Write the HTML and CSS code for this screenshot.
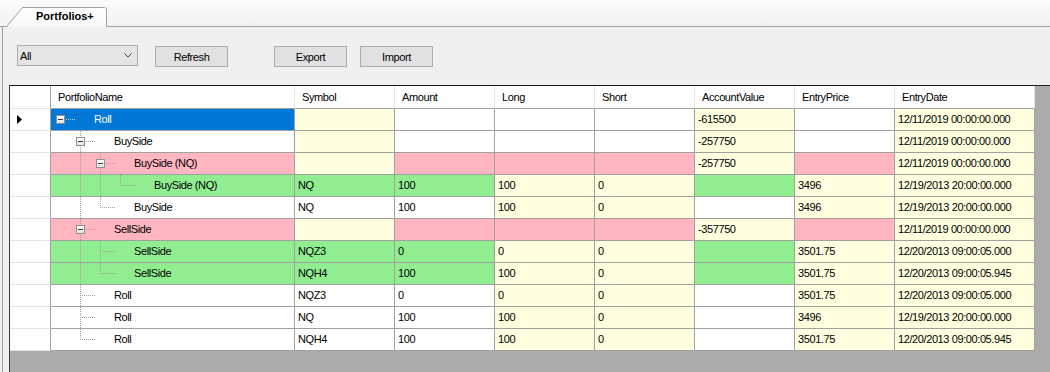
FILE: index.html
```html
<!DOCTYPE html>
<html lang="en">
<head>
  <meta charset="UTF-8" />
  <title>Portfolios+</title>
  <link rel="stylesheet" href="styles.css">
</head>
<body>
  <!-- tab strip -->
  <div class="tabstrip">
    <div class="tab">
      <svg class="tab-shape" width="103" height="20" viewBox="0 0 103 20">
        <defs>
          <linearGradient id="tabfill" x1="0" y1="0" x2="0" y2="1">
            <stop offset="0" stop-color="#ffffff"/>
            <stop offset="1" stop-color="#f7f7f7"/>
          </linearGradient>
        </defs>
        <path d="M0.5,21 L17.5,0.5 L99.5,0.5 Q101.5,0.5 101.5,2.5 L101.5,21" fill="url(#tabfill)" stroke="#a0a0a0"/>
      </svg>
      <span>Portfolios+</span>
    </div>
  </div>

  <div class="panel">
    <div class="toolbar">
      <div class="combo">
        <span>All</span>
        <svg width="8" height="5" viewBox="0 0 8 5"><polyline points="0.5,0.5 4,4 7.5,0.5" fill="none" stroke="#444"/></svg>
      </div>
      <button class="btn btn-refresh">Refresh</button>
      <button class="btn btn-export">Export</button>
      <button class="btn btn-import">Import</button>
    </div>

    <div class="grid">
      <table class="tree-grid">
        <colgroup>
          <col class="c-rh"><col class="c-name">
          <col class="c-std"><col class="c-std"><col class="c-std"><col class="c-std"><col class="c-std"><col class="c-std">
          <col class="c-date">
        </colgroup>
        <thead>
          <tr>
            <th class="corner"></th>
            <th>PortfolioName</th>
            <th>Symbol</th>
            <th>Amount</th>
            <th>Long</th>
            <th>Short</th>
            <th>AccountValue</th>
            <th>EntryPrice</th>
            <th>EntryDate</th>
          </tr>
        </thead>
        <tbody>
          <tr>
            <td class="rh"><svg width="5" height="9" viewBox="0 0 5 9"><polygon points="0,0 5,4.5 0,9" fill="#000"/></svg></td>
            <td class="name sel"><div class="node"><span class="g exp"><i class="box"></i></span><span class="label">Roll</span></div></td>
            <td class="y"></td><td></td><td></td><td></td>
            <td class="y">-615500</td><td></td><td class="y">12/11/2019 00:00:00.000</td>
          </tr>
          <tr>
            <td class="rh"></td>
            <td class="name"><div class="node"><span class="g"></span><span class="g exp pipe"><i class="box"></i></span><span class="label">BuySide</span></div></td>
            <td class="y"></td><td></td><td></td><td></td>
            <td class="y">-257750</td><td></td><td class="y">12/11/2019 00:00:00.000</td>
          </tr>
          <tr>
            <td class="rh"></td>
            <td class="name p"><div class="node"><span class="g"></span><span class="g pipe"></span><span class="g exp pipe"><i class="box"></i></span><span class="label">BuySide (NQ)</span></div></td>
            <td class="y"></td><td class="p"></td><td class="p"></td><td class="p"></td>
            <td class="y">-257750</td><td class="p"></td><td class="y">12/11/2019 00:00:00.000</td>
          </tr>
          <tr>
            <td class="rh"></td>
            <td class="name gr"><div class="node"><span class="g"></span><span class="g pipe"></span><span class="g pipe"></span><span class="g elbow"></span><span class="label">BuySide (NQ)</span></div></td>
            <td class="gr">NQ</td><td class="gr">100</td><td class="y">100</td><td class="y">0</td>
            <td class="gr"></td><td class="y">3496</td><td class="y">12/19/2013 20:00:00.000</td>
          </tr>
          <tr>
            <td class="rh"></td>
            <td class="name"><div class="node"><span class="g"></span><span class="g pipe"></span><span class="g elbow"></span><span class="label">BuySide</span></div></td>
            <td>NQ</td><td>100</td><td class="y">100</td><td class="y">0</td>
            <td></td><td class="y">3496</td><td class="y">12/19/2013 20:00:00.000</td>
          </tr>
          <tr>
            <td class="rh"></td>
            <td class="name p"><div class="node"><span class="g"></span><span class="g exp pipe"><i class="box"></i></span><span class="label">SellSide</span></div></td>
            <td class="y"></td><td class="p"></td><td class="p"></td><td class="p"></td>
            <td class="y">-357750</td><td class="p"></td><td class="y">12/11/2019 00:00:00.000</td>
          </tr>
          <tr>
            <td class="rh"></td>
            <td class="name gr"><div class="node"><span class="g"></span><span class="g pipe"></span><span class="g tee"></span><span class="label">SellSide</span></div></td>
            <td class="gr">NQZ3</td><td class="gr">0</td><td class="y">0</td><td class="y">0</td>
            <td class="gr"></td><td class="y">3501.75</td><td class="y">12/20/2013 09:00:05.000</td>
          </tr>
          <tr>
            <td class="rh"></td>
            <td class="name gr"><div class="node"><span class="g"></span><span class="g pipe"></span><span class="g elbow"></span><span class="label">SellSide</span></div></td>
            <td class="gr">NQH4</td><td class="gr">100</td><td class="y">100</td><td class="y">0</td>
            <td class="gr"></td><td class="y">3501.75</td><td class="y">12/20/2013 09:00:05.945</td>
          </tr>
          <tr>
            <td class="rh"></td>
            <td class="name"><div class="node"><span class="g"></span><span class="g tee"></span><span class="label">Roll</span></div></td>
            <td>NQZ3</td><td>0</td><td class="y">0</td><td class="y">0</td>
            <td></td><td class="y">3501.75</td><td class="y">12/20/2013 09:00:05.000</td>
          </tr>
          <tr>
            <td class="rh"></td>
            <td class="name"><div class="node"><span class="g"></span><span class="g tee"></span><span class="label">Roll</span></div></td>
            <td>NQ</td><td>100</td><td class="y">100</td><td class="y">0</td>
            <td></td><td class="y">3496</td><td class="y">12/19/2013 20:00:00.000</td>
          </tr>
          <tr>
            <td class="rh"></td>
            <td class="name"><div class="node"><span class="g"></span><span class="g elbow"></span><span class="label">Roll</span></div></td>
            <td>NQH4</td><td>100</td><td class="y">100</td><td class="y">0</td>
            <td></td><td class="y">3501.75</td><td class="y">12/20/2013 09:00:05.945</td>
          </tr>
        </tbody>
      </table>
    </div>
  </div>
</body>
</html>
```

FILE: styles.css
```css
* {
  box-sizing: border-box;
  margin: 0;
  padding: 0;
}

html, body {
  height: 100%;
}

body {
  font-family: 'Liberation Sans', Arial, sans-serif;
  font-size: 11px;
  letter-spacing: -0.4px;
  color: #000;
  background: #f0f0f0;
  display: flex;
  flex-direction: column;
  overflow: hidden;
}

/* tab strip */
.tabstrip {
  flex: none;
  height: 27px;
  display: flex;
  align-items: flex-end;
  padding-left: 5px;
  background: linear-gradient(#fbfbfb, #f2f2f2);
  border-bottom: 1px solid #a0a0a0;
}

.tab {
  position: relative;
  width: 103px;
  height: 20px;
  margin-bottom: -1px;
  padding-left: 31px;
  line-height: 19px;
  font-weight: bold;
  letter-spacing: 0;
}

.tab-shape {
  position: absolute;
  left: 0;
  top: 0;
}

.tab span {
  position: relative;
}

/* tab page */
.panel {
  flex: 1;
  min-height: 0;
  display: flex;
  flex-direction: column;
  margin-left: 2px;
  border-left: 1px solid #a0a0a0;
}

.toolbar {
  flex: none;
  display: flex;
  align-items: flex-start;
  height: 39px;
  padding: 18px 0 0 14px;
}

.combo {
  width: 121px;
  height: 21px;
  display: flex;
  align-items: center;
  justify-content: space-between;
  padding: 0 5px 0 2px;
  background: #e5e5e5;
  border: 1px solid #acacac;
}

.btn {
  width: 73px;
  height: 21px;
  margin-top: 1px;
  font: inherit;
  letter-spacing: inherit;
  color: #000;
  background: #e1e1e1;
  border: 1px solid #adadad;
}

.btn-refresh { margin-left: 17px; }
.btn-export { margin-left: 46px; }
.btn-import { margin-left: 13px; }

/* data grid */
.grid {
  flex: 1;
  min-height: 0;
  margin: 19px 0 0 6px;
  background: #ababab;
  border-top: 1px solid #1e1e1e;
  border-left: 1px solid #3c3c3c;
  overflow: hidden;
}

.tree-grid {
  width: 1025px;
  table-layout: fixed;
  border-collapse: separate;
  border-spacing: 0;
}

.c-rh { width: 41px; }
.c-name { width: 244px; }
.c-std { width: 100px; }
.c-date { width: 140px; }

.tree-grid thead tr { height: 23px; }
.tree-grid tbody tr { height: 22px; }

.tree-grid th {
  padding: 0 0 0 7px;
  text-align: left;
  font-weight: normal;
  line-height: 13px;
  white-space: nowrap;
  background: #fff;
  border-right: 1px solid #e5e5e5;
  border-bottom: 1px solid #a0a0a0;
}

.tree-grid th.corner {
  border-right-color: #a0a0a0;
  border-bottom-color: #e5e5e5;
}

.tree-grid td {
  padding: 0 3px;
  line-height: 13px;
  white-space: nowrap;
  overflow: hidden;
  vertical-align: middle;
  background: #fff;
  border-right: 1px solid #a0a0a0;
  border-bottom: 1px solid #a0a0a0;
}

.tree-grid td.rh {
  padding: 0 0 0 7px;
  border-bottom-color: #e3e3e3;
}

.tree-grid td.rh svg {
  display: block;
}

.tree-grid td.y { background: #ffffe0; }
.tree-grid td.p { background: #ffb6c1; }
.tree-grid td.gr { background: #90ee90; }
.tree-grid td.sel { background: #0078d7; color: #fff; }

/* tree column */
.tree-grid td.name {
  padding: 0;
}

.node {
  display: flex;
  align-items: center;
  height: 21px;
  margin-left: -1px;
}

.g {
  position: relative;
  flex: none;
  width: 20px;
  height: 21px;
}

.pipe::before,
.tee::before,
.elbow::before {
  content: "";
  position: absolute;
  left: 10px;
  top: 0;
  width: 1px;
  height: 21px;
  background: repeating-linear-gradient(#a0a0a0 0 1px, transparent 1px 2px);
}

.elbow::before {
  height: 11px;
}

.tee::after,
.elbow::after,
.exp::after {
  content: "";
  position: absolute;
  left: 10px;
  top: 10px;
  width: 15px;
  height: 1px;
  background: repeating-linear-gradient(90deg, #a0a0a0 0 1px, transparent 1px 2px);
}

.exp::after {
  left: 16px;
  width: 10px;
}

.sel .exp::after {
  background: repeating-linear-gradient(90deg, #d0d0d0 0 1px, transparent 1px 2px);
}

.box {
  position: absolute;
  left: 6px;
  top: 6px;
  width: 9px;
  height: 9px;
  border: 1px solid #8e8f8f;
  background: linear-gradient(#ffffff, #e3e3e3);
}

.box::after {
  content: "";
  position: absolute;
  left: 1px;
  top: 3px;
  width: 5px;
  height: 1px;
  background: #3a3a3a;
}

.label {
  padding-left: 24px;
}
```
